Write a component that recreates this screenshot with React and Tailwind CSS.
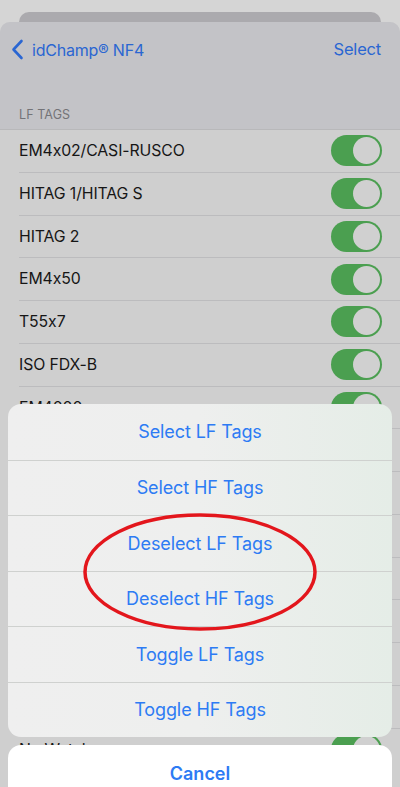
import React from "react";

const ROWS = [
  "EM4x02/CASI-RUSCO",
  "HITAG 1/HITAG S",
  "HITAG 2",
  "EM4x50",
  "T55x7",
  "ISO FDX-B",
  "EM4000",
  "EM4305",
  "ISO 11785",
  "Indala",
  "Cotag",
  "Nedap",
  "Deister",
  "Keri",
  "No Watch",
];

const ACTIONS = [
  "Select LF Tags",
  "Select HF Tags",
  "Deselect LF Tags",
  "Deselect HF Tags",
  "Toggle LF Tags",
  "Toggle HF Tags",
];

const Toggle = () => (
  <div className="w-[51px] h-[31px] rounded-full bg-[#4b9f50] p-[2px] flex justify-end">
    <div className="w-[27px] h-[27px] rounded-full bg-[#d0d0d0]" />
  </div>
);

const App = () => {
  return (
    <div
      className="relative w-[400px] h-[787px] overflow-hidden bg-[#d5d5d5] flex flex-col"
      style={{ fontFamily: "Inter, 'Liberation Sans', sans-serif" }}
    >
      {/* card behind */}
      <div className="shrink-0 mt-3 mx-[19px] h-[10px] rounded-t-[10px] bg-[#abaaae]" />

      {/* main sheet */}
      <div className="flex-1 min-h-0 overflow-hidden rounded-t-[10px] bg-[#cfcfcf] flex flex-col">
        <div className="shrink-0 bg-[#c3c3c7]">
          {/* nav */}
          <div className="h-[54px] flex items-center justify-between pl-[11px] pr-[19px] pt-[1px]">
            <div className="flex items-center gap-[8px] text-[#2a66d2]">
              <svg width="13" height="21" viewBox="0 0 13 21" fill="none">
                <path d="M10.5 2 L2.5 10.5 L10.5 19" stroke="#2a66d2" strokeWidth="2.6" strokeLinecap="round" strokeLinejoin="round" />
              </svg>
              <span className="text-[16px] tracking-[-0.2px]">idChamp® NF4</span>
            </div>
            <span className="text-[16.5px] text-[#2a66d2] tracking-[-0.2px]">Select</span>
          </div>

          <div className="h-[30px]" />
          <div className="h-[23px] pl-[19px] text-[12.5px] text-[#737377] tracking-[0.1px]">LF TAGS</div>
        </div>

        {/* list */}
        <div className="shrink-0 bg-[#cfcfcf] border-t border-[#b8b8ba]">
          {ROWS.map((name, i) => (
            <div key={i} className="pl-[19px]">
              <div className={"h-[42.75px] flex items-center justify-between pr-[18px] " + (i < ROWS.length - 1 ? "border-b border-[#bcbcbe]" : "")}>
                <span className="text-[15.8px] text-[#161616] tracking-[-0.1px]">{name}</span>
                <Toggle />
              </div>
            </div>
          ))}
        </div>
      </div>

      {/* action sheet */}
      <div className="absolute left-2 right-2 top-[404px] flex flex-col gap-2">
        <div className="rounded-[13px] overflow-hidden bg-linear-to-r from-[#efefef] via-[#eeefee] to-[#e5ede7]">
          {ACTIONS.map((a, i) => (
            <div
              key={a}
              className={"h-[55.5px] flex items-center justify-center text-[18px] text-[#2d7bf4] tracking-[-0.1px] " + (i > 0 ? "border-t border-[#cfd1cf]" : "")}
            >
              {a}
            </div>
          ))}
        </div>
        <div className="h-[60px] rounded-[13px] bg-white flex items-start justify-center pt-[15px]">
          <span className="text-[18px] font-semibold text-[#2d7bf4]">Cancel</span>
        </div>
      </div>

      {/* red annotation */}
      <svg className="absolute left-0 top-0 pointer-events-none" width="400" height="787">
        <ellipse cx="200" cy="572" rx="115" ry="57" fill="none" stroke="#e3161c" strokeWidth="3.5" />
      </svg>
    </div>
  );
};

export default App;
